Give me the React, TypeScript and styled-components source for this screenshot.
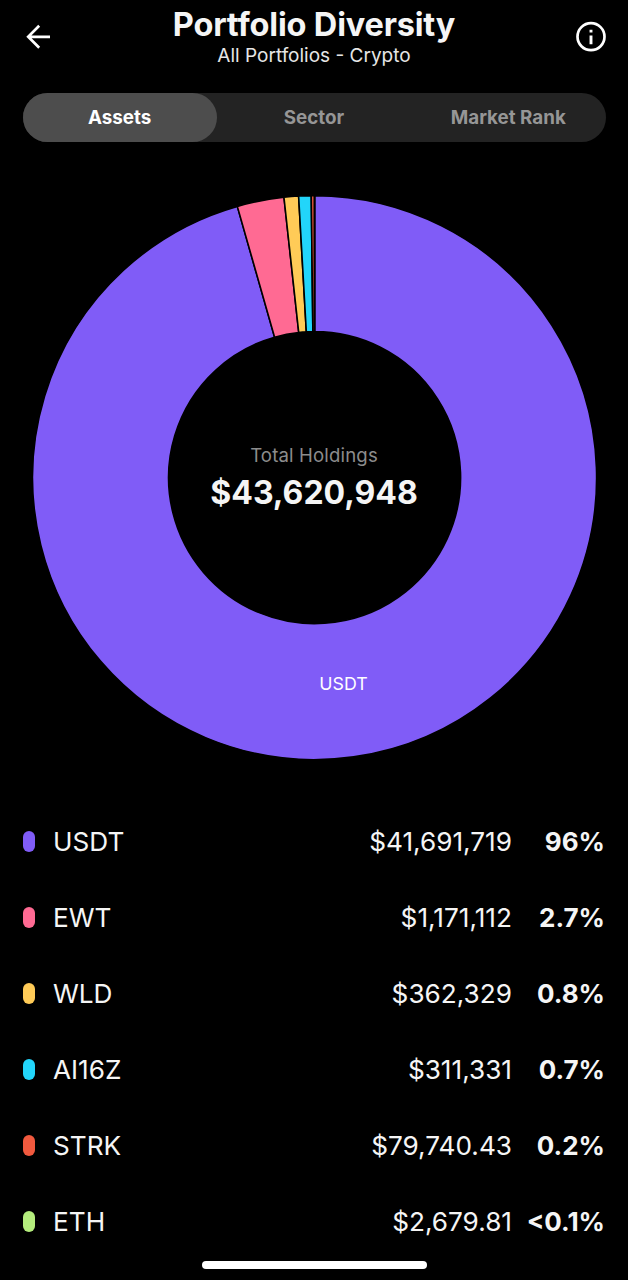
import React from "react";
import styled, { createGlobalStyle } from "styled-components";

const GlobalStyle = createGlobalStyle`
  *, *::before, *::after { box-sizing: border-box; }
  html, body { margin: 0; background: #000; }
  body { font-family: Inter, "Liberation Sans", sans-serif; color: #f5f5f5; }
  button { font: inherit; color: inherit; border: 0; padding: 0; background: none; }
`;

const Screen = styled.main`
  position: relative;
  width: 628px;
  height: 1280px;
  overflow: hidden;
  background: #000;
  display: flex;
  flex-direction: column;
`;

const Header = styled.header`
  display: grid;
  grid-template-columns: 76px 1fr 76px;
  height: 92.5px;
`;

const IconButton = styled.button<{ $end?: boolean }>`
  display: flex;
  height: 73px;
  align-items: center;
  justify-content: ${(p) => (p.$end ? "flex-end" : "flex-start")};
  padding: ${(p) => (p.$end ? "0 20px 0 0" : "0 0 0 20px")};

  svg { display: block; }
`;

const Heading = styled.div`
  display: flex;
  flex-direction: column;
  align-items: center;
  padding-top: 5px;
  white-space: nowrap;
`;

const Title = styled.h1`
  margin: 0;
  font-size: 32.5px;
  line-height: 40px;
  font-weight: 700;
  letter-spacing: -0.18px;
`;

const Subtitle = styled.p`
  margin: -1px 0 0;
  font-size: 19px;
  line-height: 24px;
  color: #e6e6e6;
`;

const Tabs = styled.nav`
  display: grid;
  grid-template-columns: repeat(3, 1fr);
  height: 49px;
  margin: 0 22px 0 23px;
  border-radius: 25px;
  background: #232323;
`;

const Tab = styled.button<{ $active?: boolean }>`
  border-radius: 25px;
  background: ${(p) => (p.$active ? "#4d4d4d" : "transparent")};
  color: ${(p) => (p.$active ? "#fff" : "#969696")};
  font-size: 18.8px;
  font-weight: 700;
  line-height: 49px;
  padding-right: 1px;
  white-space: nowrap;
`;

const ChartArea = styled.section`
  display: grid;
  place-items: center;
  height: 662px;
  padding-top: 11px;
`;

const Donut = styled.svg`
  grid-area: 1 / 1;
  display: block;
  width: 628px;
  height: 570px;
`;

const Total = styled.div`
  grid-area: 1 / 1;
  display: flex;
  flex-direction: column;
  align-items: center;
  z-index: 1;
`;

const TotalLabel = styled.span`
  font-size: 18.6px;
  line-height: 24px;
  letter-spacing: 0.15px;
  color: #8c8c8c;
`;

const TotalValue = styled.strong`
  font-size: 32px;
  line-height: 42px;
  margin-top: 5px;
  font-weight: 700;
`;

const AssetList = styled.ul`
  list-style: none;
  margin: 0;
  padding: 0 23px;
`;

const AssetRow = styled.li`
  display: grid;
  grid-template-columns: 12px 1fr auto 93px;
  align-items: center;
  height: 76px;
  font-size: 26.2px;
  line-height: 32px;
  white-space: nowrap;
`;

const Marker = styled.span<{ $color: string }>`
  width: 12px;
  height: 21px;
  border-radius: 6px;
  background: ${(p) => p.$color};
`;

const Symbol = styled.span`
  padding-left: 18px;
`;

const Amount = styled.span`
  text-align: right;
`;

const Share = styled.span`
  text-align: right;
  font-size: 26px;
  font-weight: 700;
`;

const HomeIndicator = styled.div`
  position: absolute;
  left: 202px;
  bottom: 11.5px;
  width: 225px;
  height: 8px;
  border-radius: 4px;
  background: #fff;
`;

const assets = [
  { symbol: "USDT", amount: "$41,691,719", value: 41691719, share: "96%", color: "#805cf7" },
  { symbol: "EWT", amount: "$1,171,112", value: 1171112, share: "2.7%", color: "#ff6a93" },
  { symbol: "WLD", amount: "$362,329", value: 362329, share: "0.8%", color: "#ffcb57" },
  { symbol: "AI16Z", amount: "$311,331", value: 311331, share: "0.7%", color: "#22d5fa" },
  { symbol: "STRK", amount: "$79,740.43", value: 79740.43, share: "0.2%", color: "#f1593e" },
  { symbol: "ETH", amount: "$2,679.81", value: 2679.81, share: "<0.1%", color: "#b4ec7c" },
];

const CX = 314.6;
const CY = 284.6;
const OUTER = 282;
const INNER = 146;

function point(radius: number, turn: number) {
  const a = turn * Math.PI * 2;
  return `${CX + radius * Math.sin(a)} ${CY - radius * Math.cos(a)}`;
}

function slicePath(start: number, end: number) {
  const large = end - start > 0.5 ? 1 : 0;
  return [
    `M ${point(OUTER, start)}`,
    `A ${OUTER} ${OUTER} 0 ${large} 1 ${point(OUTER, end)}`,
    `L ${point(INNER, end)}`,
    `A ${INNER} ${INNER} 0 ${large} 0 ${point(INNER, start)}`,
    "Z",
  ].join(" ");
}

const sum = assets.reduce((acc, a) => acc + a.value, 0);
let cursor = 0;
const slices = assets.map((a) => {
  const start = cursor;
  cursor += a.value / sum;
  return { symbol: a.symbol, color: a.color, d: slicePath(start, cursor) };
});

export default function App() {
  return (
    <>
      <GlobalStyle />
      <Screen>
        <Header>
          <IconButton aria-label="Back">
            <svg width="36" height="36" viewBox="0 0 36 36" fill="none" stroke="#fff" strokeWidth="2.7">
              <path d="M30 17.8H8M19.2 6.8L8.2 17.8L19.2 28.8" />
            </svg>
          </IconButton>
          <Heading>
            <Title>Portfolio Diversity</Title>
            <Subtitle>All Portfolios - Crypto</Subtitle>
          </Heading>
          <IconButton $end aria-label="Information">
            <svg width="34" height="34" viewBox="0 0 34 34" fill="none">
              <circle cx="17" cy="16.7" r="13.5" stroke="#fff" strokeWidth="2.7" />
              <path d="M17 15.4V24.2M17 9.7V12.5" stroke="#fff" strokeWidth="2.9" />
            </svg>
          </IconButton>
        </Header>
        <Tabs>
          <Tab $active>Assets</Tab>
          <Tab>Sector</Tab>
          <Tab>Market Rank</Tab>
        </Tabs>
        <ChartArea>
          <Donut viewBox="0 0 628 570">
            {slices.map((s) => (
              <path key={s.symbol} d={s.d} fill={s.color} stroke="#000" strokeWidth="1.6" />
            ))}
            <text x="343.5" y="497" textAnchor="middle" fill="#fff" fontSize="17.8">
              USDT
            </text>
          </Donut>
          <Total>
            <TotalLabel>Total Holdings</TotalLabel>
            <TotalValue>$43,620,948</TotalValue>
          </Total>
        </ChartArea>
        <AssetList>
          {assets.map((a) => (
            <AssetRow key={a.symbol}>
              <Marker $color={a.color} />
              <Symbol>{a.symbol}</Symbol>
              <Amount>{a.amount}</Amount>
              <Share>{a.share}</Share>
            </AssetRow>
          ))}
        </AssetList>
        <HomeIndicator />
      </Screen>
    </>
  );
}
